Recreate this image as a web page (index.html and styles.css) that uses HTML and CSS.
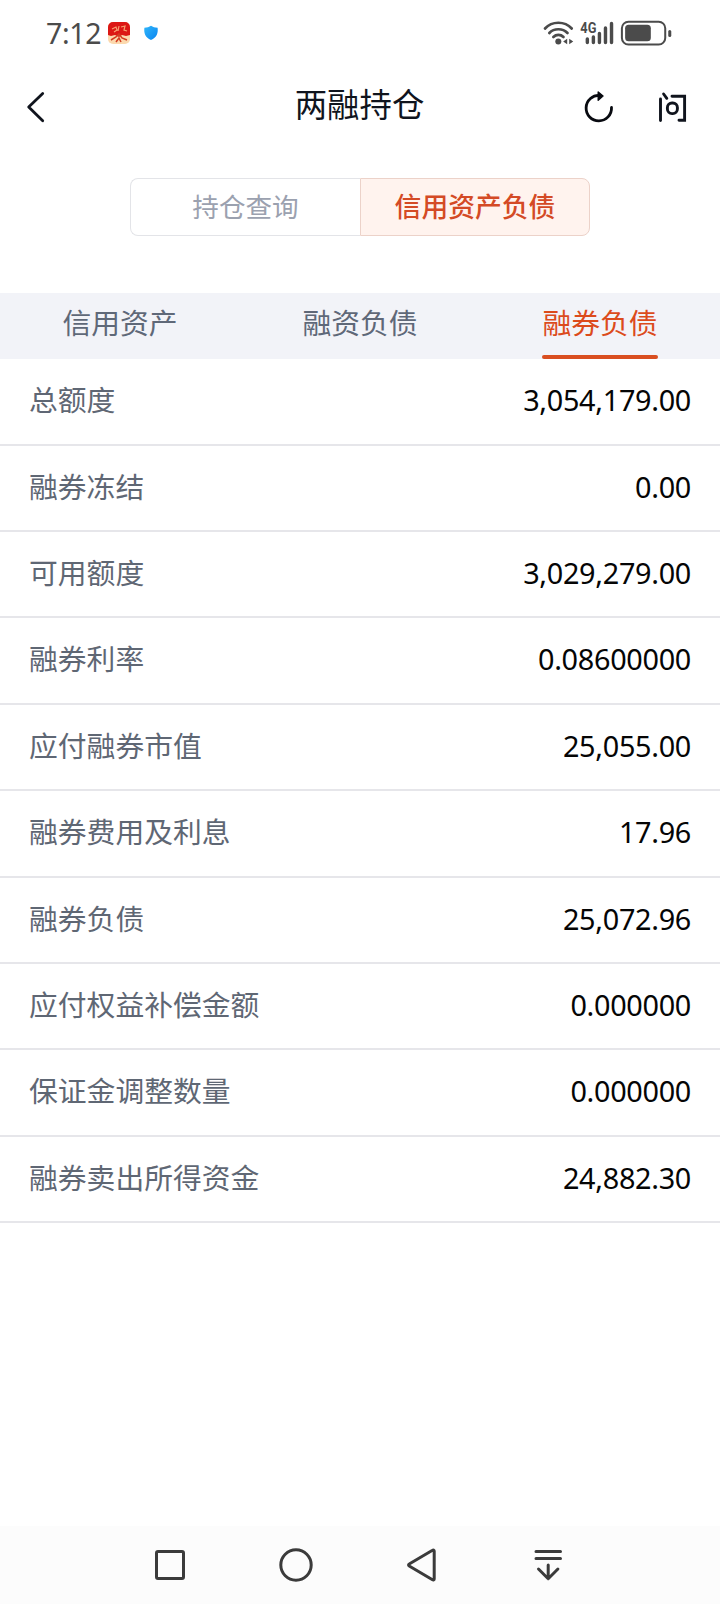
FILE: index.html
```html
<!DOCTYPE html>
<html lang="zh-CN">
<head>
<meta charset="utf-8">
<title>两融持仓</title>
<link rel="stylesheet" href="styles.css">
</head>
<body>
<div class="screen">
  <div class="status">
    <span class="clock">7:12</span>
    <svg class="app-badge" width="24" height="24" viewBox="0 0 24 24">
      <rect x="1" y="1" width="22" height="22" rx="5" fill="#fbd9ae"/>
      <path d="M1 14V6a5 5 0 0 1 5-5h12a5 5 0 0 1 5 5v8l-4 1-4-1-3 2-4-2-4 1z" fill="#dc1714"/>
      <path d="M5 8l4-2 1 3-3 2M12 5l-1 5M14 6l4-1-1 4 3 1" fill="none" stroke="#f7a071" stroke-width="1.2"/>
      <path d="M4 19l5-3 3-3 3 4 5 2M9 21l3-4 2 4" fill="none" stroke="#d33a20" stroke-width="1.5"/>
    </svg>
    <svg class="shield" width="16" height="16" viewBox="0 0 16 16">
      <defs><linearGradient id="sh" x1="0" y1="0" x2="1" y2="1"><stop offset="0" stop-color="#2fb6fa"/><stop offset="1" stop-color="#0b84f0"/></linearGradient></defs>
      <path d="M8 .8C9.8 2 12 2.700 14.600 2.800c.7 5.500-.8 9.600-6.600 12.200C2.200 12.400.7 8.300 1.400 2.800 4 2.700 6.200 2 8 .8z" fill="url(#sh)"/>
    </svg>
    <svg class="signals" width="131" height="27" viewBox="0 0 130 27" preserveAspectRatio="none">
      <g fill="none" stroke="#4b4b4b" stroke-width="2.700" stroke-linecap="round">
        <path d="M2 8.500C9 .8 21.500.8 28.500 8.500"/>
        <path d="M6.300 13C11 8 19.500 8 24.300 13"/>
        <path d="M10.300 17c2.800-2.800 7.200-2.800 10 0"/>
      </g>
      <circle cx="15.200" cy="21.500" r="3" fill="#4b4b4b"/>
      <path d="M24 18.800v5.400l-4-2.700zM26 18.800v5.400l4-2.700z" fill="#4b4b4b"/>
      <text class="network" x="37" y="13" textLength="16" lengthAdjust="spacingAndGlyphs">4G</text>
      <path d="M44 19v3.500M50 17v5.500M56 13.500v9M62 8v14.500M68 3.500v19" stroke="#4b4b4b" stroke-width="3.400" stroke-linecap="round"/>
      <rect x="78.300" y="1.700" width="43" height="22.800" rx="6.500" fill="none" stroke="#4b4b4b" stroke-width="2"/>
      <rect x="81.500" y="4.700" width="25.500" height="16.500" rx="3.500" fill="#4b4b4b"/>
      <path d="M125.800 11.500v4" stroke="#4b4b4b" stroke-width="3" stroke-linecap="round"/>
    </svg>
  </div>

  <header class="header">
    <svg class="back" width="20" height="34" viewBox="0 0 20 34"><path d="M16.700 3.500L2.700 17l14 13.800" fill="none" stroke="#10141d" stroke-width="2.800" stroke-linecap="round" stroke-linejoin="round"/></svg>
    <h1 class="title">两融持仓</h1>
    <div class="actions">
      <svg width="30" height="34" viewBox="0 0 30 34">
        <path d="M27.500 17.500A12.700 12.700 0 1 1 16 5.500" fill="none" stroke="#080a10" stroke-width="2.800" stroke-linecap="round"/>
        <path d="M14.200 2l4.800 4-4.800 4.200z" fill="#080a10" stroke="#080a10" stroke-width="1.400" stroke-linejoin="round"/>
      </svg>
      <svg width="30" height="34" viewBox="0 0 30 34">
        <g fill="none" stroke="#10141d" stroke-width="2.900" stroke-linecap="round">
          <path d="M2.500 9v21.500M5.600 4l3.200 4.300"/>
          <path d="M14 6.200h12.600v24H21"/>
          <rect x="9.400" y="13" width="10" height="10.600" rx="4.600"/>
        </g>
      </svg>
    </div>
  </header>

  <div class="segments">
    <div class="segment">持仓查询</div>
    <div class="segment segment-active">信用资产负债</div>
  </div>

  <nav class="tabs">
    <div class="tab"><span class="tab-label">信用资产</span></div>
    <div class="tab"><span class="tab-label">融资负债</span></div>
    <div class="tab"><span class="tab-label tab-active">融券负债</span></div>
  </nav>

  <main class="list">
    <div class="row"><span class="name">总额度</span><span class="value">3,054,179.00</span></div>
    <div class="row"><span class="name">融券冻结</span><span class="value">0.00</span></div>
    <div class="row"><span class="name">可用额度</span><span class="value">3,029,279.00</span></div>
    <div class="row"><span class="name">融券利率</span><span class="value">0.08600000</span></div>
    <div class="row"><span class="name">应付融券市值</span><span class="value">25,055.00</span></div>
    <div class="row"><span class="name">融券费用及利息</span><span class="value">17.96</span></div>
    <div class="row"><span class="name">融券负债</span><span class="value">25,072.96</span></div>
    <div class="row"><span class="name">应付权益补偿金额</span><span class="value">0.000000</span></div>
    <div class="row"><span class="name">保证金调整数量</span><span class="value">0.000000</span></div>
    <div class="row"><span class="name">融券卖出所得资金</span><span class="value">24,882.30</span></div>
  </main>

  <footer class="navbar">
    <svg width="36" height="36" viewBox="0 0 36 36"><rect x="4.500" y="4.500" width="27" height="27" rx="1.500"/></svg>
    <svg width="36" height="36" viewBox="0 0 36 36"><circle cx="18" cy="18" r="15.200"/></svg>
    <svg width="36" height="36" viewBox="0 0 36 36"><path d="M28.500 3.300c.8-.5 1.700-.2 1.700.8v27.800c0 1-.9 1.300-1.700.8L5.200 19c-.9-.5-.9-1.500 0-2z"/></svg>
    <svg width="36" height="36" viewBox="0 0 36 36"><path d="M6 4.500h24.500M6 11.500h24.500M18.200 18v13.500M8.500 22l9.700 9.700 9.700-9.700"/></svg>
  </footer>
</div>
</body>
</html>
```
FILE: styles.css
```css
* {
  box-sizing: border-box;
}

body {
  margin: 0;
  background: #fff;
  font-family: "Noto Sans CJK SC", sans-serif;
}

.screen {
  display: flex;
  flex-direction: column;
  width: 720px;
  height: 1604px;
  overflow: hidden;
}

.status {
  display: flex;
  align-items: center;
  height: 66px;
  padding-left: 46px;
}

.clock {
  width: 60px;
  color: #4b4b4b;
  font: 28.500px/40px "Noto Sans", sans-serif;
  letter-spacing: -0.3px;
  white-space: nowrap;
}

.app-badge {
  margin-left: 1px;
}

.shield {
  margin-left: 12px;
}

.signals {
  margin-left: 384px;
  flex: none;
}

.network {
  fill: #4b4b4b;
  font: bold 14px Roboto, sans-serif;
}

.header {
  display: grid;
  grid-template-columns: 1fr auto 1fr;
  align-items: center;
  height: 82px;
  padding: 0 32px 0 26px;
}

.title {
  margin: 0 0 9px;
  padding-left: 5px;
  color: #10141d;
  font-size: 32.400px;
  font-weight: 400;
  line-height: 44px;
}

.actions {
  display: flex;
  justify-content: flex-end;
  gap: 44px;
}

.segments {
  display: flex;
  width: 460px;
  height: 58px;
  margin: 30px auto 57px;
}

.segment {
  width: 230px;
  border: 1px solid #e3e4e8;
  border-right: 0;
  border-radius: 8px 0 0 8px;
  color: #9ba1af;
  font-size: 26.600px;
  line-height: 53px;
  text-align: center;
}

.segment-active {
  border: 1px solid #ecd2c9;
  border-radius: 0 8px 8px 0;
  background: #fff3ee;
  color: #d44a25;
  font-size: 26.800px;
  font-weight: 500;
}

.tabs {
  display: grid;
  grid-template-columns: repeat(3, 1fr);
  height: 66px;
  background: #f2f3f8;
}

.tab {
  display: flex;
  justify-content: center;
}

.tab-label {
  height: 66px;
  color: #5f6878;
  font-size: 28.800px;
  line-height: 58px;
}

.tab-active {
  position: relative;
  color: #dc4b1c;
}

.tab-active::after {
  content: "";
  position: absolute;
  right: 0;
  bottom: 0;
  left: 0;
  height: 4px;
  border-radius: 2px;
  background: #d94e20;
}

.list {
  flex: 1;
  padding-top: 0.4px;
}

.row {
  display: flex;
  justify-content: space-between;
  height: 86.360px;
  padding: 0 29px;
  border-bottom: 2px solid #e6e6ea;
}

.name {
  color: #5f6774;
  font-size: 28.800px;
  line-height: 80px;
}

.value {
  color: #050505;
  font-family: "Noto Sans", sans-serif;
  font-size: 28.800px;
  letter-spacing: -0.3px;
  line-height: 82px;
}

.navbar {
  display: flex;
  justify-content: center;
  gap: 90px;
  height: 78px;
  padding: 21px 2px 0 0;
  background: #fcfcfc;
}

.navbar svg {
  fill: none;
  stroke: #3b3b3b;
  stroke-width: 3;
  stroke-linecap: round;
  stroke-linejoin: round;
}
```
